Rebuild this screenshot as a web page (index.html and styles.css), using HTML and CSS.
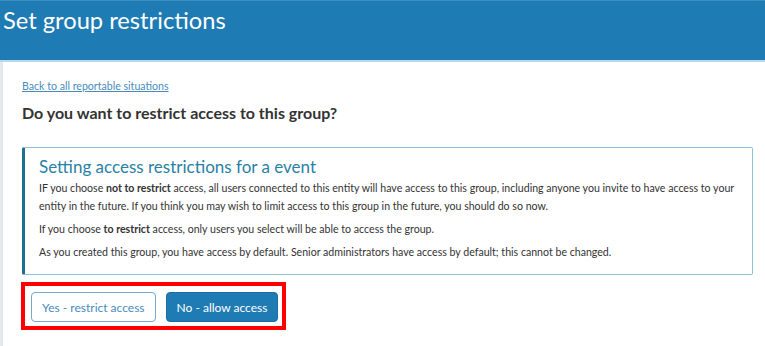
FILE: index.html
```html
<!DOCTYPE html>
<html lang="en">
<head>
    <meta charset="UTF-8">
    <title>Set group restrictions</title>
    <link rel="stylesheet" href="styles.css">
</head>
<body>
    <div class="header">
        <h1 class="page-title">Set group restrictions</h1>
    </div>
    <div class="main">
        <a class="back-link" href="#">Back to all reportable situations</a>
        <h2 class="question">Do you want to restrict access to this group?</h2>

        <div class="info-box">
            <div class="info-title">Setting access restrictions for a event</div>
            <p>IF you choose <b>not to restrict</b> access, all users connected to this entity will have access to this group, including anyone you invite to have access to your entity in the future. If you think you may wish to limit access to this group in the future, you should do so now.</p>
            <p>If you choose <b>to restrict</b> access, only users you select will be able to access the group.</p>
            <p>As you created this group, you have access by default. Senior administrators have access by default; this cannot be changed.</p>
        </div>

        <div class="actions">
            <button class="btn btn-outline">Yes - restrict access</button>
            <button class="btn btn-primary">No - allow access</button>
        </div>
    </div>
</body>
</html>
```

FILE: styles.css
```css
body {
    margin: 0;
    font-family: Lato, "Open Sans", sans-serif;
    color: #333333;
    background: #ffffff;
}

.header {
    height: 62px;
    background: #1e7bb4;
    border-top: 1px solid #3b8cc0;
    border-bottom: 2px solid #b8d8ec;
    box-sizing: border-box;
}

.page-title {
    margin: 0;
    padding: 5px 0 0 3px;
    font-size: 23.7px;
    font-weight: normal;
    color: #ffffff;
}

.main {
    min-height: 284px;
    padding: 18px 12px 0 19px;
    border-left: 3px solid #e6e9ec;
    box-sizing: border-box;
    display: flex;
    flex-direction: column;
    align-items: flex-start;
}

.back-link {
    font-size: 10.6px;
    color: #4a8bbd;
}

.question {
    margin: 11px 0 0;
    font-size: 16px;
    font-weight: bold;
    color: #333333;
}

.info-box {
    margin-top: 25px;
    align-self: stretch;
    padding: 8px 12px 8px 14px;
    border: 1px solid #8cc1d6;
    border-left: 3px solid #1f6f8f;
    border-radius: 2px;
}

.info-title {
    font-size: 17px;
    color: #2a7fa6;
    margin-bottom: 2px;
}

.info-box p {
    margin: 0 0 5px;
    font-size: 10.6px;
    line-height: 18px;
}

.actions {
    margin-top: 7px;
    margin-left: -1px;
    display: flex;
    gap: 10px;
    padding: 6px 4px 4px 6px;
    border: 4px solid #ff0000;
}

.btn {
    height: 30px;
    padding: 0 10px;
    font-family: Lato, "Open Sans", sans-serif;
    font-size: 12px;
    border-radius: 4px;
    cursor: pointer;
}

.btn-outline {
    background: #ffffff;
    color: #4a8bbd;
    border: 1px solid #76a9cc;
}

.btn-primary {
    background: #1e7bb4;
    color: #ffffff;
    border: 1px solid #1a6ea2;
}
```
